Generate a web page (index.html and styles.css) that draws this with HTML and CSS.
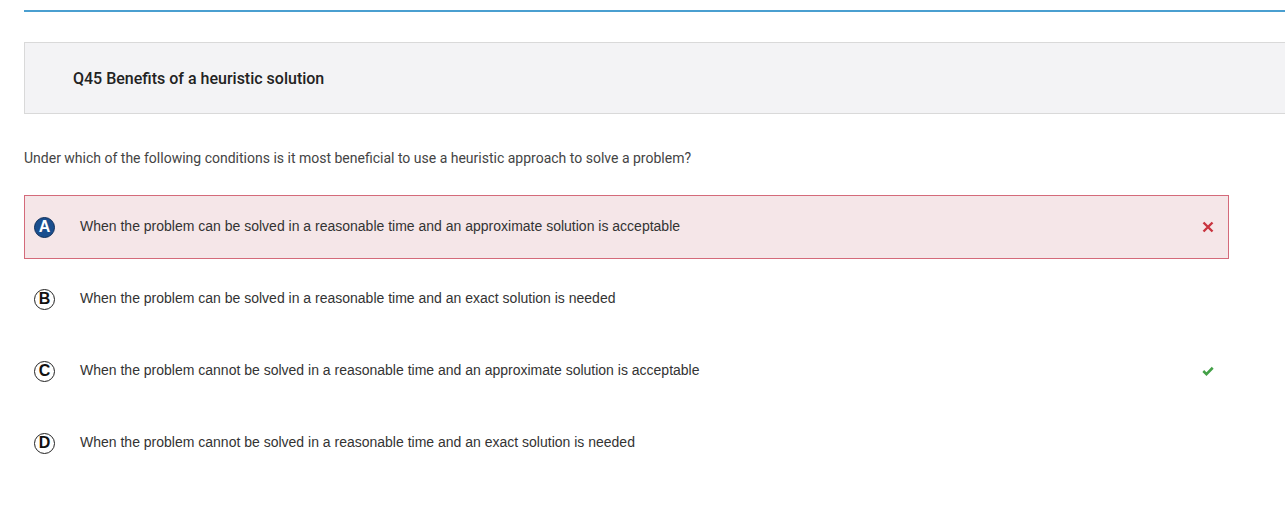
FILE: index.html
```html
<!DOCTYPE html>
<html>
<head>
<meta charset="utf-8">
<link rel="stylesheet" href="styles.css">
</head>
<body>
<div class="page">
  <div class="topline"></div>
  <div class="qhead"><h2 class="qtitle">Q45 Benefits of a heuristic solution</h2></div>
  <p class="qtext">Under which of the following conditions is it most beneficial to use a heuristic approach to solve a problem?</p>
  <ul class="options">
    <li class="opt wrong">
      <span class="letter selected">A</span>
      <span class="otext">When the problem can be solved in a reasonable time and an approximate solution is acceptable</span>
      <span class="mark">
        <svg width="12" height="12" viewBox="0 0 12 12"><path d="M1.5 1.5 L10.5 10.5 M10.5 1.5 L1.5 10.5" stroke="#c9343f" stroke-width="2.4" fill="none"/></svg>
      </span>
    </li>
    <li class="opt">
      <span class="letter">B</span>
      <span class="otext">When the problem can be solved in a reasonable time and an exact solution is needed</span>
    </li>
    <li class="opt">
      <span class="letter">C</span>
      <span class="otext">When the problem cannot be solved in a reasonable time and an approximate solution is acceptable</span>
      <span class="mark">
        <svg width="14" height="12" viewBox="0 0 14 12"><path d="M1.5 6 L5.2 9.6 L12.5 2.2" stroke="#43a047" stroke-width="3" fill="none"/></svg>
      </span>
    </li>
    <li class="opt">
      <span class="letter">D</span>
      <span class="otext">When the problem cannot be solved in a reasonable time and an exact solution is needed</span>
    </li>
  </ul>
</div>
</body>
</html>
```
FILE: styles.css
```css
html, body {
  margin: 0;
  padding: 0;
  background: #fff;
  overflow: hidden;
}
.page {
  padding: 10px 0 0 24px;
}
.topline {
  height: 2px;
  background: #4a9fd0;
}
.qhead {
  margin-top: 30px;
  height: 70px;
  background: #f3f3f5;
  border: 1px solid #d9d9d9;
  border-right: none;
  display: flex;
  align-items: center;
  padding-left: 48px;
}
.qtitle {
  margin: 0;
  font-family: Roboto, "Liberation Sans", sans-serif;
  font-weight: 500;
  font-size: 16px;
  color: #222;
}
.qtext {
  margin: 35px 0 0 0;
  font-family: Roboto, "Liberation Sans", sans-serif;
  font-size: 14px;
  color: #444;
  line-height: 18px;
}
.options {
  list-style: none;
  margin: 28px 0 0 0;
  padding: 0;
  width: 1205px;
}
.opt {
  height: 62px;
  display: flex;
  align-items: center;
  border: 1px solid transparent;
  margin-bottom: 8px;
  padding-left: 9px;
  font-family: "Liberation Sans", Arial, sans-serif;
  font-size: 14px;
  color: #333;
}
.opt.wrong {
  background: #f5e6e8;
  border-color: #d46a7a;
}
.letter {
  box-sizing: border-box;
  width: 21px;
  height: 21px;
  border-radius: 50%;
  border: 1.5px solid #222;
  display: flex;
  align-items: center;
  justify-content: center;
  font-family: "Liberation Sans", Arial, sans-serif;
  font-weight: bold;
  font-size: 16px;
  color: #111;
  flex: none;
}
.letter.selected {
  background: #1a4e8e;
  border-color: #0f2f5a;
  color: #fff;
}
.otext {
  margin-left: 25px;
  padding-bottom: 2px;
  flex: 1;
}
.mark {
  width: 12px;
  display: flex;
  justify-content: center;
  margin-right: 14px;
}
```
